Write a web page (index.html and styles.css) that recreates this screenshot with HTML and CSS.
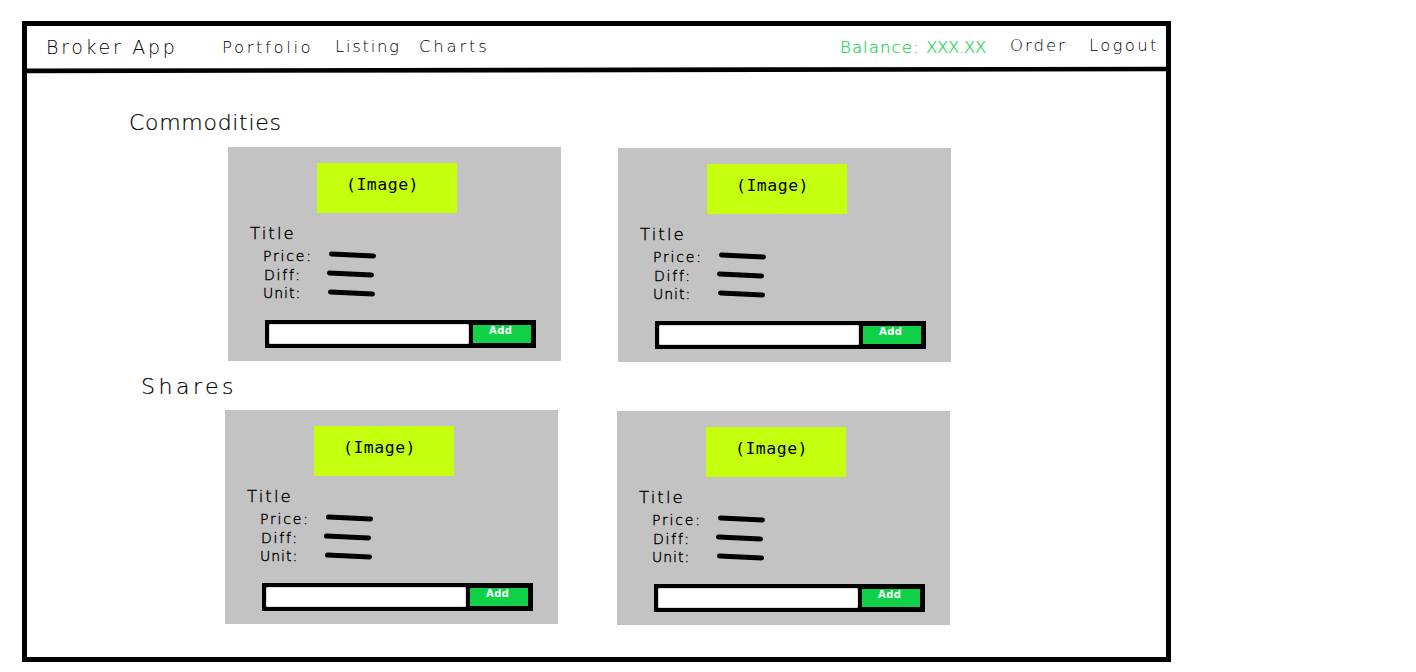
FILE: index.html
```html
<!DOCTYPE html>
<html lang="en">
<head>
<meta charset="utf-8">
<title>Broker App</title>
<link rel="stylesheet" href="styles.css">
</head>
<body>
<div class="frame">
  <header class="header">
    <div class="brand">Broker App</div>
    <nav class="nav">
      <a class="portfolio">Portfolio</a>
      <a class="listing">Listing</a>
      <a class="charts">Charts</a>
    </nav>
    <div class="account">
      <span class="balance">Balance: <span class="amount">XXX.XX</span></span>
      <a class="order">Order</a>
      <a class="logout">Logout</a>
    </div>
  </header>
  <svg class="rule" width="1139" height="8" viewBox="0 0 1139 8"><path d="M0 4.9 1139 3"/></svg>
  <main class="content">
    <h2 class="heading commodities">Commodities</h2>
    <section class="cards cards-commodities">
      <article class="card">
        <div class="image"><span>(Image)</span></div>
        <h3 class="title">Title</h3>
        <div class="details">
          <div class="labels"><span class="price">Price:</span><span class="diff">Diff:</span><span class="unit">Unit:</span></div>
          <svg class="values" width="52" height="50" viewBox="0 0 52 50"><path d="M4.5 5 46.5 7M2.5 24 44.5 26M3.5 43 45.5 45"/></svg>
        </div>
        <div class="form"><div class="input"></div><div class="add"><span>Add</span></div></div>
      </article>
      <article class="card">
        <div class="image"><span>(Image)</span></div>
        <h3 class="title">Title</h3>
        <div class="details">
          <div class="labels"><span class="price">Price:</span><span class="diff">Diff:</span><span class="unit">Unit:</span></div>
          <svg class="values" width="52" height="50" viewBox="0 0 52 50"><path d="M4.5 5 46.5 7M2.5 24 44.5 26M3.5 43 45.5 45"/></svg>
        </div>
        <div class="form"><div class="input"></div><div class="add"><span>Add</span></div></div>
      </article>
    </section>
    <h2 class="heading shares">Shares</h2>
    <section class="cards cards-shares">
      <article class="card">
        <div class="image"><span>(Image)</span></div>
        <h3 class="title">Title</h3>
        <div class="details">
          <div class="labels"><span class="price">Price:</span><span class="diff">Diff:</span><span class="unit">Unit:</span></div>
          <svg class="values" width="52" height="50" viewBox="0 0 52 50"><path d="M4.5 5 46.5 7M2.5 24 44.5 26M3.5 43 45.5 45"/></svg>
        </div>
        <div class="form"><div class="input"></div><div class="add"><span>Add</span></div></div>
      </article>
      <article class="card">
        <div class="image"><span>(Image)</span></div>
        <h3 class="title">Title</h3>
        <div class="details">
          <div class="labels"><span class="price">Price:</span><span class="diff">Diff:</span><span class="unit">Unit:</span></div>
          <svg class="values" width="52" height="50" viewBox="0 0 52 50"><path d="M4.5 5 46.5 7M2.5 24 44.5 26M3.5 43 45.5 45"/></svg>
        </div>
        <div class="form"><div class="input"></div><div class="add"><span>Add</span></div></div>
      </article>
    </section>
  </main>
</div>
</body>
</html>
```
FILE: styles.css
```css
* { box-sizing: border-box; margin: 0; padding: 0; }
body {
  background: #fff;
  color: #000;
  font-family: "DejaVu Sans Light", "DejaVu Sans", sans-serif;
  font-weight: 200;
  white-space: nowrap;
  overflow: hidden;
}
.frame {
  width: 1149px;
  height: 641px;
  margin: 21px 0 0 22px;
  border: 5px solid #000;
}
.header {
  display: flex;
  height: 40px;
  font-size: 16.5px;
  line-height: 20px;
}
.brand { width: 175px; padding: 11px 0 0 19px; font-size: 19px; letter-spacing: 2.7px; }
.nav { display: flex; width: 635px; padding-top: 11px; }
.portfolio { width: 113px; padding: 1px 0 0 20px; letter-spacing: 2.6px; }
.listing { width: 84px; padding-left: 20px; letter-spacing: 1.7px; }
.charts { padding-left: 20px; letter-spacing: 2.8px; }
.account { display: flex; padding-top: 10px; }
.balance { width: 169px; padding: 2px 0 0 3px; color: #10d147; letter-spacing: 1.1px; -webkit-text-stroke: 0.2px; }
.amount { letter-spacing: -0.3px; }
.order { width: 80px; padding-left: 4px; letter-spacing: 2px; }
.logout { padding-left: 3px; letter-spacing: 2.3px; }
.rule { display: block; overflow: visible; }
.rule path { stroke: #000; stroke-width: 4.6; }

.heading { font-size: 22px; font-weight: 200; line-height: 26px; -webkit-text-stroke: 0.2px; }
.commodities { padding: 36px 0 0 102px; height: 73px; letter-spacing: 0.7px; }
.shares { padding: 12px 0 0 114px; height: 48px; letter-spacing: 3.5px; }
.cards { display: flex; align-items: flex-start; height: 215px; }
.cards .card + .card { margin-top: 1px; }
.cards-commodities { gap: 57px; padding-left: 201px; }
.cards-shares { gap: 59px; padding-left: 198px; }

.card { width: 333px; height: 214px; padding-top: 16px; background: #c3c3c3; }
.image {
  width: 140px;
  height: 50px;
  margin-left: 89px;
  padding: 12px 0 0 29px;
  background: #c4ff0e;
  font-family: "DejaVu Sans Mono", monospace;
  font-size: 16.5px;
  line-height: 20px;
  letter-spacing: 0.5px;
}
.title { height: 36px; padding: 11px 0 0 22px; font-size: 16.5px; font-weight: 200; line-height: 20px; letter-spacing: 2.1px; -webkit-text-stroke: 0.4px; }
.details { display: flex; height: 71px; font-size: 14px; line-height: 18px; }
.labels { display: flex; flex-direction: column; width: 99px; margin-top: -2px; padding-left: 35px; letter-spacing: 1.8px; -webkit-text-stroke: 0.4px; }
.diff { margin-top: 1px; padding-left: 1px; }
.unit { letter-spacing: 1px; }
.values { overflow: visible; }
.values path { fill: none; stroke: #000; stroke-width: 5; stroke-linecap: round; }
.form {
  display: flex;
  gap: 4px;
  width: 271px;
  height: 28px;
  margin-left: 37px;
  padding: 4px 5px 4px 4px;
  background: #000;
}
.input { width: 200px; background: #fff; border: 1px solid #ddd; border-radius: 1px; }
.add {
  width: 58px;
  height: 18px;
  margin-top: 1px;
  padding-left: 16px;
  background: #10d147;
  color: #fff;
  font: 700 10px/12px "DejaVu Sans", sans-serif;
  letter-spacing: 0.4px;
}
```
